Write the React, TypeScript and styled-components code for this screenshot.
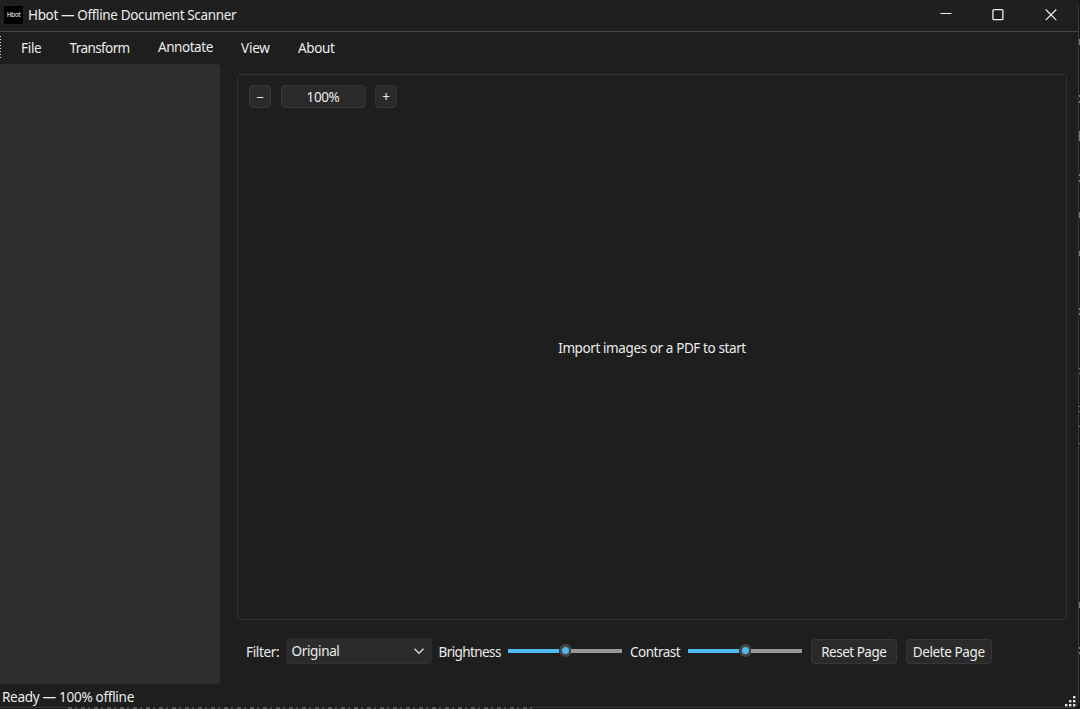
import React from "react";
import styled, { createGlobalStyle } from "styled-components";

const GlobalStyle = createGlobalStyle`
  * { box-sizing: border-box; }
  html, body { margin: 0; background: #1a1a1a; overflow: hidden; }
  body { font-family: "Noto Sans", "Open Sans", sans-serif; font-size: 13.5px; color: #ececec; }
`;

const Desktop = styled.div`
  position: relative;
  width: 1080px;
  height: 709px;
  background: #171717;
  overflow: hidden;
`;

const Window = styled.div`
  display: flex;
  flex-direction: column;
  width: 1079px;
  height: 708px;
  background: #1e1e1e;
  border-right: 1px solid #393939;
  border-bottom: 1px solid #393939;
  border-radius: 0 7px 7px 0;
`;

const Text = styled.span<{ $spacing?: number }>`
  display: inline-block;
  white-space: nowrap;
  line-height: 20px;
  letter-spacing: ${(p) => p.$spacing ?? -0.2}px;
`;

const TitleBar = styled.header`
  display: flex;
  align-items: center;
  flex: none;
  height: 32px;
  padding: 0 0 2px 4px;
  background: #1f1f1f;
  border-bottom: 1px solid #454545;
`;

const AppIcon = styled.div`
  display: flex;
  align-items: center;
  justify-content: center;
  width: 19px;
  height: 18px;
  margin: 0 5px 0 0;
  background: #000;
  color: #c4c4c4;
  font-size: 6.5px;
  font-weight: 600;
  letter-spacing: -0.5px;
`;

const WindowControls = styled.div`
  display: flex;
  margin-left: auto;
  padding-right: 1px;
`;

const ControlButton = styled.button`
  display: flex;
  align-items: center;
  justify-content: center;
  width: 52.5px;
  height: 28px;
  padding: 0;
  border: 0;
  background: none;
  color: #eee;
`;

const MenuBar = styled.nav`
  display: flex;
  align-items: center;
  flex: none;
  height: 32px;
`;

const Grip = styled.div`
  width: 1px;
  height: 24px;
  background: repeating-linear-gradient(#d8d8d8 0 1px, #1e1e1e 1px 3px);
`;

const MenuItem = styled.div<{ $gap: number; $width: number; $raised?: boolean }>`
  width: ${(p) => p.$width}px;
  margin-left: ${(p) => p.$gap}px;
  padding-bottom: ${(p) => (p.$raised ? 2 : 0)}px;
`;

const Body = styled.div`
  display: flex;
  flex: none;
  height: 620px;
`;

const Sidebar = styled.aside`
  width: 220px;
  background: #2d2d2d;
  border-right: 1px solid #303030;
  border-radius: 0 4px 4px 0;
`;

const Main = styled.main`
  display: flex;
  flex-direction: column;
  width: 830px;
  margin: 10px 0 0 17px;
`;

const Canvas = styled.section`
  display: flex;
  flex-direction: column;
  height: 546px;
  padding: 10px 11px;
  border: 1px solid #323232;
  border-radius: 4px;
`;

const ZoomBar = styled.div`
  display: flex;
  gap: 9.5px;
  height: 23px;
`;

const Button = styled.button<{ $width: number }>`
  display: flex;
  align-items: center;
  justify-content: center;
  width: ${(p) => p.$width}px;
  padding: 0;
  border: 1px solid #363636;
  border-radius: 4px;
  background: #2a2a2a;
  color: #ececec;
  font: inherit;
`;

const EmptyState = styled.div`
  display: flex;
  align-items: center;
  justify-content: center;
  flex: 1;
  padding-bottom: 22px;
`;

const Controls = styled.div`
  display: flex;
  align-items: center;
  height: 26px;
  margin-top: 18px;
  padding-left: 9px;
`;

const FieldLabel = styled.label<{ $width: number; $gap?: number }>`
  width: ${(p) => p.$width}px;
  margin-left: ${(p) => p.$gap ?? 0}px;
  padding-top: 1px;
`;

const Select = styled.div`
  display: flex;
  align-items: center;
  justify-content: space-between;
  width: 146px;
  height: 26px;
  margin-right: 7px;
  padding: 0 7px 0 6px;
  border-radius: 4px;
  background: #2b2b2b;
  border-bottom: 1px solid #323232;
`;

const Track = styled.div`
  display: flex;
  align-items: center;
  width: 114px;
  height: 14px;
  margin-bottom: 1px;
`;

const Bar = styled.div<{ $active?: boolean }>`
  flex: 1;
  height: 4px;
  background: ${(p) => (p.$active ? "#50b9ef" : "#989898")};
`;

const Thumb = styled.div`
  width: 13px;
  height: 13px;
  margin: 0 -0.5px;
  border: 3.5px solid #454545;
  border-radius: 50%;
  background: #50b9ef;
`;

const Actions = styled.div`
  display: flex;
  gap: 9.5px;
  height: 25px;
  margin: 1px 0 0 9px;
`;

const StatusBar = styled.footer`
  display: flex;
  align-items: center;
  justify-content: space-between;
  flex: 1;
  padding: 3px 2px 0 2px;
`;

const SizeGrip = styled.svg`
  margin-top: 8px;
`;

const Behind = styled.i<{ $top: number; $height: number }>`
  position: absolute;
  left: 1079px;
  top: ${(p) => p.$top}px;
  width: 1px;
  height: ${(p) => p.$height}px;
  background: #777;
`;

const BehindText = styled.i`
  position: absolute;
  left: 68px;
  top: 707px;
  width: 464px;
  height: 2px;
  background: repeating-linear-gradient(90deg, #555 0 4px, #222 4px 7px, #4a4a4a 7px 9px, #222 9px 13px);
`;

const behindMarks: [number, number][] = [
  [39, 6], [95, 2], [101, 2], [131, 10], [174, 2], [180, 2], [212, 6],
  [251, 5], [308, 2], [313, 2], [368, 1], [373, 1], [406, 1], [411, 1],
  [426, 1], [443, 1], [602, 6], [647, 2], [652, 2],
];

const gripDots = [[8, 0], [4, 4], [8, 4], [0, 8], [4, 8], [8, 8]];

const Slider = () => (
  <Track>
    <Bar $active />
    <Thumb />
    <Bar />
  </Track>
);

export default function App() {
  return (
    <Desktop>
      <GlobalStyle />
      <Window>
        <TitleBar>
          <AppIcon>Hbot</AppIcon>
          <Text $spacing={-0.36}>Hbot — Offline Document Scanner</Text>
          <WindowControls>
            <ControlButton aria-label="Minimize">
              <svg width="12" height="12"><path d="M0.5 4.5h11" stroke="currentColor" /></svg>
            </ControlButton>
            <ControlButton aria-label="Maximize">
              <svg width="12" height="12" fill="none">
                <rect x="0.9" y="0.7" width="10" height="10" rx="1.2" stroke="currentColor" strokeWidth="1.3" />
              </svg>
            </ControlButton>
            <ControlButton aria-label="Close">
              <svg width="12" height="12"><path d="M0.7 0.5l10.6 10.6M11.3 0.5L0.7 11.1" stroke="currentColor" strokeWidth="1.2" /></svg>
            </ControlButton>
          </WindowControls>
        </TitleBar>
        <MenuBar>
          <Grip />
          <MenuItem $gap={20} $width={21}><Text $spacing={-0.3}>File</Text></MenuItem>
          <MenuItem $gap={27.5} $width={60}><Text $spacing={-0.6}>Transform</Text></MenuItem>
          <MenuItem $gap={28.5} $width={55} $raised><Text $spacing={-0.45}>Annotate</Text></MenuItem>
          <MenuItem $gap={28} $width={29}><Text>View</Text></MenuItem>
          <MenuItem $gap={28} $width={38}><Text $spacing={-0.35}>About</Text></MenuItem>
        </MenuBar>
        <Body>
          <Sidebar />
          <Main>
            <Canvas>
              <ZoomBar>
                <Button $width={22}><Text>−</Text></Button>
                <Button $width={85}><Text $spacing={-0.4}>100%</Text></Button>
                <Button $width={22}><Text>+</Text></Button>
              </ZoomBar>
              <EmptyState><Text $spacing={-0.4}>Import images or a PDF to start</Text></EmptyState>
            </Canvas>
            <Controls>
              <FieldLabel $width={39.5}><Text $spacing={-0.35}>Filter:</Text></FieldLabel>
              <Select>
                <Text $spacing={-0.35}>Original</Text>
                <svg width="12" height="12" fill="none"><path d="M1.5 3.8L6 8.3l4.5-4.5" stroke="#ddd" strokeWidth="1.3" /></svg>
              </Select>
              <FieldLabel $width={69.5}><Text $spacing={-0.6}>Brightness</Text></FieldLabel>
              <Slider />
              <FieldLabel $width={58} $gap={8}><Text $spacing={-0.5}>Contrast</Text></FieldLabel>
              <Slider />
              <Actions>
                <Button $width={85.5}><Text $spacing={-0.5}>Reset Page</Text></Button>
                <Button $width={85.5}><Text $spacing={-0.4}>Delete Page</Text></Button>
              </Actions>
            </Controls>
          </Main>
        </Body>
        <StatusBar>
          <Text $spacing={-0.28}>Ready — 100% offline</Text>
          <SizeGrip width="11" height="11">
            {gripDots.map(([x, y]) => <rect key={`${x}-${y}`} x={x} y={y} width="2.4" height="2.4" fill="#e0e0e0" />)}
          </SizeGrip>
        </StatusBar>
      </Window>
      <BehindText />
      {behindMarks.map(([top, height]) => <Behind key={top} $top={top} $height={height} />)}
    </Desktop>
  );
}
